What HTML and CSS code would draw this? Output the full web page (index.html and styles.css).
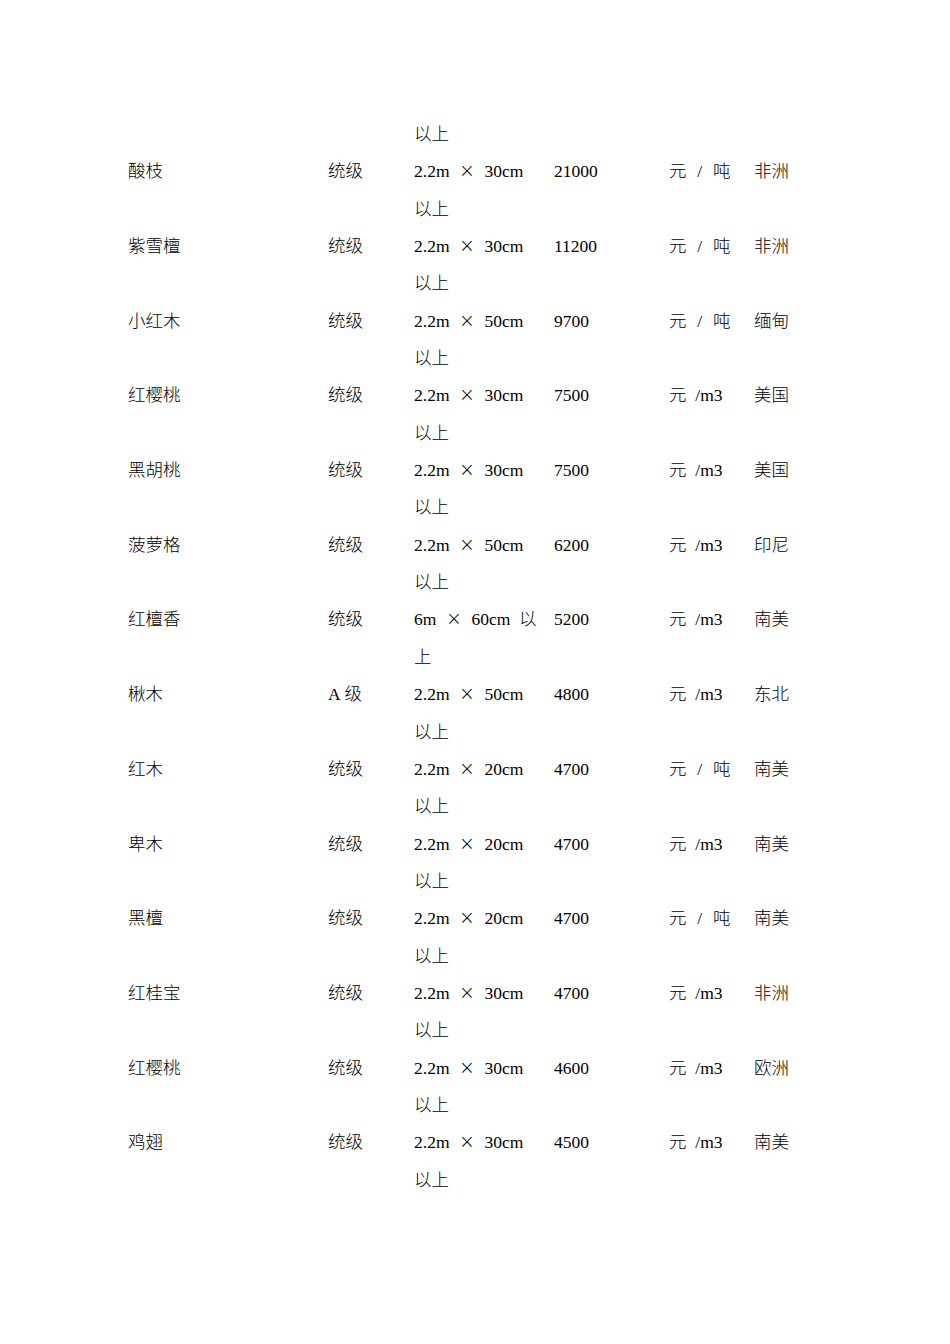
FILE: index.html
```html
<!DOCTYPE html>
<html lang="zh">
<head>
<meta charset="utf-8">
<link rel="stylesheet" href="styles.css">
<title>木材价格</title>
</head>
<body>
<div class="page">
  <div class="table">
    <div class="c"></div><div class="c"></div><div class="c">以上</div><div class="c"></div><div class="c"></div><div class="c"></div>

    <div class="c">酸枝</div><div class="c">统级</div><div class="c"><span class="l">2.2m </span><span class="x">×</span><span class="l"> 30cm </span>以上</div><div class="c"><span class="l">21000</span></div><div class="c">元<span class="l s"> / </span>吨</div><div class="c">非洲</div>

    <div class="c">紫雪檀</div><div class="c">统级</div><div class="c"><span class="l">2.2m </span><span class="x">×</span><span class="l"> 30cm </span>以上</div><div class="c"><span class="l">11200</span></div><div class="c">元<span class="l s"> / </span>吨</div><div class="c">非洲</div>

    <div class="c">小红木</div><div class="c">统级</div><div class="c"><span class="l">2.2m </span><span class="x">×</span><span class="l"> 50cm </span>以上</div><div class="c"><span class="l">9700</span></div><div class="c">元<span class="l s"> / </span>吨</div><div class="c">缅甸</div>

    <div class="c">红樱桃</div><div class="c">统级</div><div class="c"><span class="l">2.2m </span><span class="x">×</span><span class="l"> 30cm </span>以上</div><div class="c"><span class="l">7500</span></div><div class="c">元<span class="l"> /m3</span></div><div class="c">美国</div>

    <div class="c">黑胡桃</div><div class="c">统级</div><div class="c"><span class="l">2.2m </span><span class="x">×</span><span class="l"> 30cm </span>以上</div><div class="c"><span class="l">7500</span></div><div class="c">元<span class="l"> /m3</span></div><div class="c">美国</div>

    <div class="c">菠萝格</div><div class="c">统级</div><div class="c"><span class="l">2.2m </span><span class="x">×</span><span class="l"> 50cm </span>以上</div><div class="c"><span class="l">6200</span></div><div class="c">元<span class="l"> /m3</span></div><div class="c">印尼</div>

    <div class="c">红檀香</div><div class="c">统级</div><div class="c"><span class="l">6m </span><span class="x">×</span><span class="l"> 60cm </span>以上</div><div class="c"><span class="l">5200</span></div><div class="c">元<span class="l"> /m3</span></div><div class="c">南美</div>

    <div class="c">楸木</div><div class="c"><span class="l a">A </span>级</div><div class="c"><span class="l">2.2m </span><span class="x">×</span><span class="l"> 50cm </span>以上</div><div class="c"><span class="l">4800</span></div><div class="c">元<span class="l"> /m3</span></div><div class="c">东北</div>

    <div class="c">红木</div><div class="c">统级</div><div class="c"><span class="l">2.2m </span><span class="x">×</span><span class="l"> 20cm </span>以上</div><div class="c"><span class="l">4700</span></div><div class="c">元<span class="l s"> / </span>吨</div><div class="c">南美</div>

    <div class="c">卑木</div><div class="c">统级</div><div class="c"><span class="l">2.2m </span><span class="x">×</span><span class="l"> 20cm </span>以上</div><div class="c"><span class="l">4700</span></div><div class="c">元<span class="l"> /m3</span></div><div class="c">南美</div>

    <div class="c">黑檀</div><div class="c">统级</div><div class="c"><span class="l">2.2m </span><span class="x">×</span><span class="l"> 20cm </span>以上</div><div class="c"><span class="l">4700</span></div><div class="c">元<span class="l s"> / </span>吨</div><div class="c">南美</div>

    <div class="c">红桂宝</div><div class="c">统级</div><div class="c"><span class="l">2.2m </span><span class="x">×</span><span class="l"> 30cm </span>以上</div><div class="c"><span class="l">4700</span></div><div class="c">元<span class="l"> /m3</span></div><div class="c">非洲</div>

    <div class="c">红樱桃</div><div class="c">统级</div><div class="c"><span class="l">2.2m </span><span class="x">×</span><span class="l"> 30cm </span>以上</div><div class="c"><span class="l">4600</span></div><div class="c">元<span class="l"> /m3</span></div><div class="c">欧洲</div>

    <div class="c">鸡翅</div><div class="c">统级</div><div class="c"><span class="l">2.2m </span><span class="x">×</span><span class="l"> 30cm </span>以上</div><div class="c"><span class="l">4500</span></div><div class="c">元<span class="l"> /m3</span></div><div class="c">南美</div>
  </div>
</div>
</body>
</html>
```

FILE: styles.css
```css
html, body {
  margin: 0;
  padding: 0;
  background: #ffffff;
}

.page {
  width: 950px;
  height: 1344px;
  box-sizing: border-box;
  padding: 114px 0 0 128px;
  color: #000000;
  font-family: "Noto Sans CJK SC", "Liberation Serif", serif;
  font-weight: 300;
  font-size: 17.5px;
  line-height: 37.35px;
}

.table {
  display: grid;
  grid-template-columns: 200px 86px 140px 115px 85px 80px;
}

.c {
  padding-right: 12px;
  line-break: strict;
}

.c:nth-child(6n+3) {
  padding-right: 15px;
}

.l {
  font-family: "Liberation Serif", serif;
  font-weight: 400;
  font-size: 17.5px;
  line-height: 1;
  white-space: pre-wrap;
  word-spacing: 4.4px;
}

.l.s {
  word-spacing: 6.4px;
}

.l.a {
  word-spacing: 0.5px;
}

.x {
  display: inline-block;
  width: 17.5px;
  line-height: 1;
  text-align: center;
  font-family: "DejaVu Sans", sans-serif;
  font-weight: 200;
  font-size: 19px;
}
```
